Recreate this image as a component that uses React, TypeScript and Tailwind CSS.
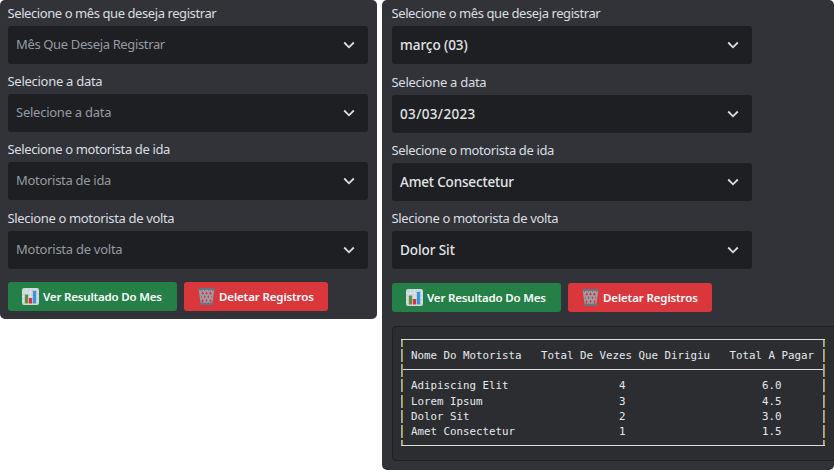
import { clsx } from "clsx";

type Field = { label: string; value: string; labelTrack: string; valueTrack: string; gap: string };

function Chevron() {
  return (
    <svg width="12" height="8" viewBox="0 0 12 8" fill="none" stroke="#dbdee1" strokeWidth="1.8" className="mr-[13.5px] shrink-0">
      <path d="M1.2 1.5 L6 6.3 L10.8 1.5" />
    </svg>
  );
}

function ChartIcon() {
  return (
    <svg width="17" height="17" viewBox="0 0 36 36" className="shrink-0">
      <rect width="36" height="36" rx="4" fill="#ccd6dd" />
      <path d="M0 9h36M0 18h36M0 27h36M9 0v36M18 0v36M27 0v36" stroke="#e1e8ed" strokeWidth="1.500" />
      <rect x="6" y="14" width="7" height="19" rx="1" fill="#5c913b" />
      <rect x="14.500" y="21" width="7" height="12" rx="1" fill="#dd2e44" />
      <rect x="23" y="6" width="7" height="27" rx="1" fill="#3b94d9" />
    </svg>
  );
}

function BasketIcon() {
  return (
    <svg width="17" height="17" viewBox="0 0 36 36" className="shrink-0">
      <path d="M3 3 L7 33 H29 L33 3" fill="none" stroke="#8e9aa3" strokeWidth="3" />
      <path d="M4 7 L17 32 M10 3 L25 32 M18 3 L29 25 M26 3 L32 14 M32 7 L19 32 M26 3 L11 32 M18 3 L7 25 M10 3 L4 14" stroke="#97a3ac" strokeWidth="3.400" />
      <rect x="0" y="0" width="36" height="4" rx="2" fill="#66757f" />
      <rect x="4" y="31" width="28" height="5" rx="1" fill="#66757f" />
    </svg>
  );
}

function Select({ field, filled }: { field: Field; filled: boolean }) {
  return (
    <div className={field.gap}>
      <div className={clsx("-ml-[0.5px] h-[26px] pt-[4px] text-[13px] leading-[19px] whitespace-nowrap text-[#dbdee1]", field.labelTrack)}>{field.label}</div>
      <div className="flex h-[38px] w-[360px] items-center justify-between rounded-[3px] bg-[#1e1f22] pl-2">
        <span className={clsx("leading-5 whitespace-nowrap", filled ? "pb-px text-[13.5px] font-medium text-[#e3e5e8]" : "pb-[2px] text-[13px] text-[#949ba4]", field.valueTrack)}>{field.value}</span>
        <Chevron />
      </div>
    </div>
  );
}

function Actions() {
  return (
    <div className="flex gap-[7px] text-[11.5px] font-semibold text-white">
      <button className="flex h-[29px] w-[169px] items-center gap-[4px] rounded-[3px] bg-[#248046] pl-[14px] whitespace-nowrap">
        <ChartIcon />
        <span className="tracking-[-0.18px]">Ver Resultado Do Mes</span>
      </button>
      <button className="flex h-[29px] w-[144px] items-center gap-[4px] rounded-[3px] bg-[#da373c] pl-[14px] whitespace-nowrap">
        <BasketIcon />
        <span className="tracking-[-0.13px]">Deletar Registros</span>
      </button>
    </div>
  );
}

const emptyFields: Field[] = [
  { label: "Selecione o mês que deseja registrar", value: "Mês Que Deseja Registrar", labelTrack: "tracking-[-0.42px]", valueTrack: "tracking-[-0.36px]", gap: "" },
  { label: "Selecione a data", value: "Selecione a data", labelTrack: "tracking-[-0.28px]", valueTrack: "tracking-[-0.25px]", gap: "mt-[4px]" },
  { label: "Selecione o motorista de ida", value: "Motorista de ida", labelTrack: "tracking-[-0.37px]", valueTrack: "tracking-[-0.3px]", gap: "mt-[4px]" },
  { label: "Slecione o motorista de volta", value: "Motorista de volta", labelTrack: "tracking-[-0.34px]", valueTrack: "tracking-[-0.26px]", gap: "mt-[5px]" },
];

const filledFields: Field[] = [
  { ...emptyFields[0], value: "março (03)", valueTrack: "tracking-[-0.05px]" },
  { ...emptyFields[1], value: "03/03/2023", valueTrack: "tracking-[0.35px]", gap: "mt-[5px]" },
  { ...emptyFields[2], value: "Amet Consectetur", valueTrack: "tracking-[-0.17px]", gap: "mt-[4px]" },
  { ...emptyFields[3], value: "Dolor Sit", valueTrack: "tracking-[-0.08px]", gap: "mt-[4px]" },
];

function Bar() {
  return <i className="w-[2px] border-r border-l border-r-[#bd922c] border-l-[#8fb2c4]" />;
}

function Line({ text, gap = "" }: { text: string; gap?: string }) {
  return (
    <div className={clsx("flex h-[13px] justify-between", gap)}>
      <Bar />
      <pre className="w-[404px] font-['DejaVu_Sans_Mono',monospace] text-[10.8px] leading-[13px]">{text}</pre>
      <Bar />
    </div>
  );
}

function Results() {
  return (
    <div className="mt-[14px] h-[135px] w-[450px] rounded-[4px] border border-[#1e1f22] bg-[#2b2d31] pt-[12px] pl-[8px] text-[#e6e9ec]">
      <div className="w-[424px]">
        <div className="flex h-[8px] justify-between border-t border-[#dbdee1]"><Bar /><Bar /></div>
        <Line gap="mt-[2px]" text={"Nome Do Motorista   Total De Vezes Que Dirigiu   Total A Pagar"} />
        <div className="mt-[2px] flex h-[13px] justify-between">
          <Bar />
          <i className="mt-[5px] h-px flex-1 bg-[#dbdee1]" />
          <Bar />
        </div>
        <Line gap="mt-[2px]" text={"Adipiscing Elit                 4                     6.0"} />
        <Line gap="mt-[3px]" text={"Lorem Ipsum                     3                     4.5"} />
        <Line gap="mt-[2px]" text={"Dolor Sit                       2                     3.0"} />
        <Line gap="mt-[2px]" text={"Amet Consectetur                1                     1.5"} />
        <div className="mt-[2px] flex h-[6px] justify-between border-b border-[#dbdee1]"><Bar /><Bar /></div>
      </div>
    </div>
  );
}

export default function App() {
  return (
    <main className="flex h-[470px] w-[834px] items-start gap-[5px] overflow-hidden bg-white font-['Noto_Sans',sans-serif]">
      <section className="h-[319px] w-[377px] shrink-0 rounded-[5px] bg-[#313338] pl-2">
        {emptyFields.map((f) => <Select key={f.label} field={f} filled={false} />)}
        <div className="mt-[13px]"><Actions /></div>
      </section>
      <section className="h-[470px] w-[452px] shrink-0 overflow-hidden rounded-[5px] bg-[#313338] pl-[10px]">
        {filledFields.map((f) => <Select key={f.label} field={f} filled />)}
        <div className="mt-[14px]"><Actions /></div>
        <Results />
      </section>
    </main>
  );
}
